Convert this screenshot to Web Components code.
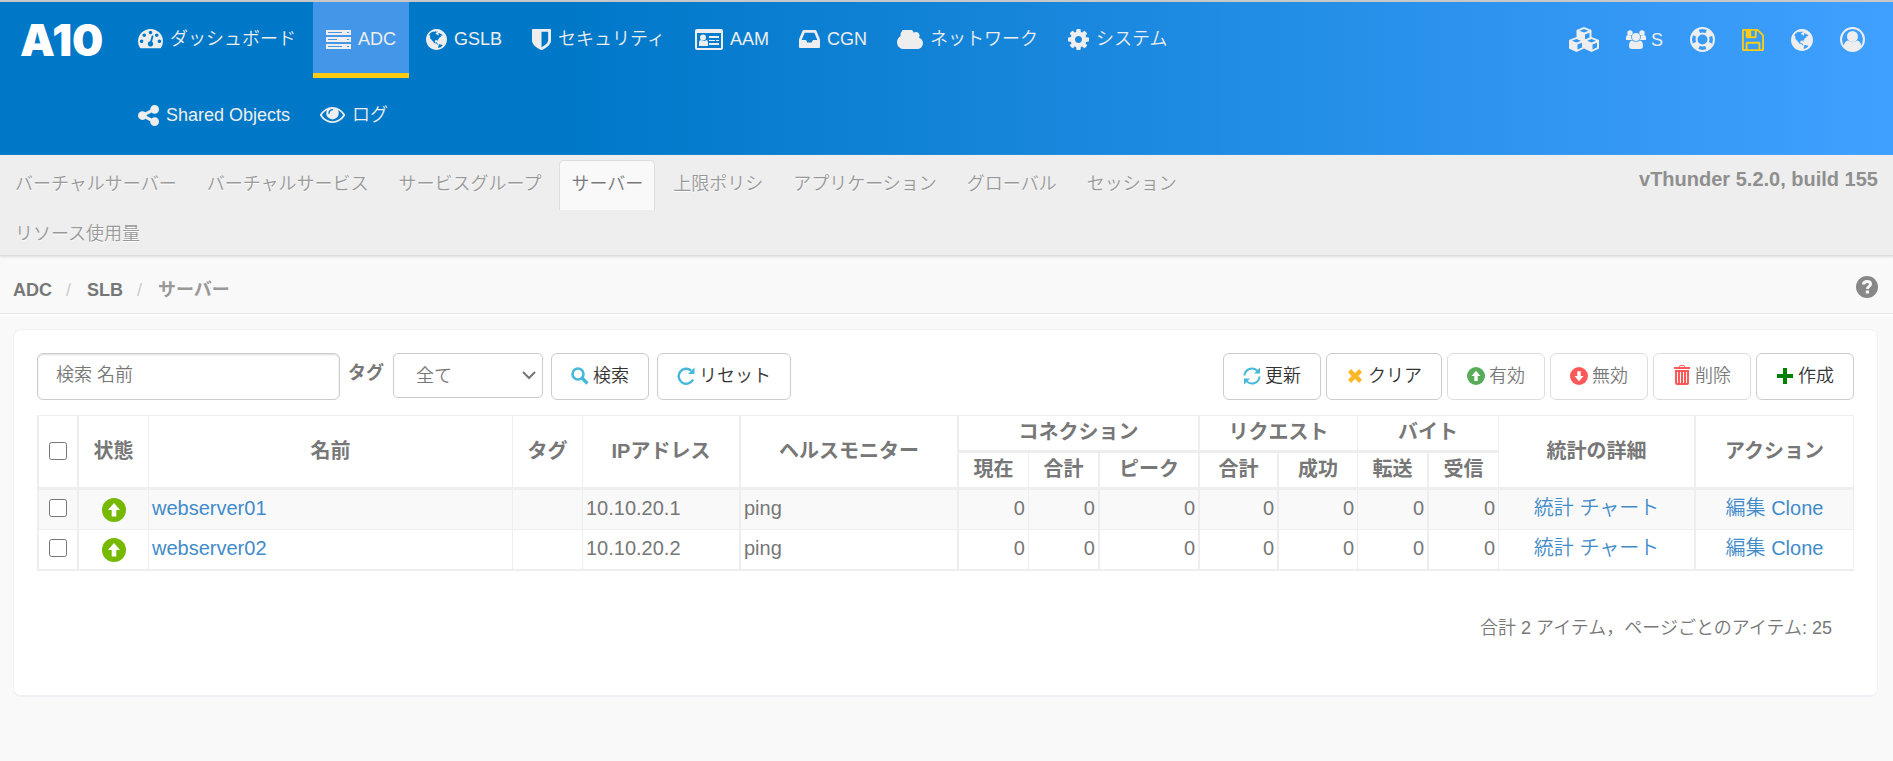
<!DOCTYPE html>
<html lang="ja">
<head>
<meta charset="utf-8">
<meta name="viewport" content="width=device-width, initial-scale=1">
<title>サーバー - A10</title>
<style>
  body {
    margin: 0;
    background: #f9f9f9;
    color: #777;
    font: 18px/24px "Liberation Sans", "Noto Sans CJK JP", sans-serif;
    --thin: 350;
  }
</style>
</head>
<body>
<adc-app></adc-app>
<script>
const ICONS = {
  dash: ['0 256 1792 1536', '<path d="M384 1152q0-53-37.500-90.500t-90.500-37.500-90.500 37.500-37.500 90.500 37.500 90.500 90.500 37.500 90.500-37.500 37.500-90.500zm192-448q0-53-37.500-90.500t-90.500-37.500-90.500 37.500-37.500 90.500 37.500 90.500 90.500 37.500 90.500-37.500 37.500-90.500zm428 481l101-382q6-26-7.500-48.500t-38.500-29.500-48 6.500-30 39.500l-101 382q-60 5-107 43.500t-63 98.500q-20 77 20 146t117 89 146-20 89-117q16-60-6-117t-72-91zm660-33q0-53-37.500-90.500t-90.500-37.500-90.500 37.500-37.500 90.500 37.500 90.500 90.500 37.500 90.500-37.500 37.500-90.500zm-640-640q0-53-37.500-90.500t-90.500-37.500-90.500 37.500-37.500 90.500 37.500 90.500 90.500 37.500 90.500-37.500 37.500-90.500zm448 192q0-53-37.500-90.500t-90.500-37.500-90.500 37.500-37.500 90.500 37.500 90.500 90.500 37.500 90.500-37.500 37.500-90.500zm320 448q0 261-141 483-19 29-54 29h-1402q-35 0-54-29-141-221-141-483 0-182 71-348t191-286 286-191 348-71 348 71 286 191 191 286 71 348z"/>'],
  server: ['0 0 25 19', '<path fill-rule="evenodd" d="M0 0h25v5H0zM2 2v1h14v-1zM21 2v1h2v-1zM0 7h25v5H0zM2 9v1h9v-1zM21 9v1h2v-1zM0 14h25v5H0zM2 16v1h14v-1zM21 16v1h2v-1z"/>'],
  globe: ['128 128 1536 1536', '<path d="M896 128q209 0 385.500 103t279.500 279.500 103 385.500-103 385.500-279.500 279.500-385.500 103-385.500-103-279.500-279.500-103-385.500 103-385.500 279.500-279.500 385.500-103zm274 521q-2 1-9.500 9.500t-13.500 9.500q2 0 4.500-5t5-11 3.500-7q6-7 22-15 14-6 52-12 34-8 51 11-2-2 9.500-13t14.500-12q3-2 15-4.500t15-7.500l2-22q-12 1-17.500-7t-6.500-21q0 2-6 8 0-7-4.500-8t-11.500 1-9 1q-10-3-15-7.500t-8-16.500-4-15q-2-5-9.500-10.500t-9.500-10.500q-1-2-2.500-5.500t-3-6.500-4-5.500-5.500-2.500-7 5-7.500 10-4.500 5q-3-2-6-1.500t-4.500 1-4.500 3-5 3.500q-3 2-8.500 3t-8.500 2q15-5-1-11-10-4-16-3 9-4 7.500-12t-8.500-14h5q-1-4-8.500-8.500t-17.500-8.500-13-6q-8-5-34-9.500t-33-.5q-5 6-4.500 10.500t4 14 3.500 12.500q1 6-5.500 13t-6.500 12q0 7 14 15.500t10 21.500q-3 8-16 16t-16 12q-5 8-1.500 18.500t10.500 16.500q2 2 1.500 4t-3.500 4.500-5.500 4-6.500 3.500l-3 2q-11 5-20.500-6t-13.500-26q-7-25-16-30-23-8-29 1-5-13-41-26-25-9-58-4 6-1 0-15-7-15-19-12 3-6 4-17.500t1-13.500q3-13 12-23 1-1 7-8.500t9.500-13.500.5-6q35 4 50-11 5-5 11.500-17t10.500-17q9-6 14-5.500t14.500 5.500 14.500 5q14 1 15.500-11t-7.500-20q12 1 3-17-4-7-8-9-12-4-27 5-8 4 2 8-1-1-9.500 10.500t-16.500 17.500-16-5q-1-1-5.500-13.500t-9.500-13.500q-8 0-16 15 3-8-11-15t-24-8q19-12-8-27-7-4-20.500-5t-19.500 4q-5 7-5.500 11.500t5 8 10.500 5.500 11.500 4 8.500 3q14 10 8 14-2 1-8.500 3.500t-11.500 4.500-6 4q-3 4 0 14t-2 14q-5-5-9-17.500t-7-16.500q7 9-25 6l-10-1q-4 0-16 2t-20.500 1-13.500-8q-4-8 0-20 1-4 4-2-4-3-11-9.500t-10-8.500q-46 15-94 41 6 1 12-1 5-2 13-6.500t10-5.500q34-14 42-7l5-5q14 16 20 25-7-4-30-1-20 6-22 12 7 12 5 18-4-3-11.500-10t-14.500-11-15-5q-16 0-22 1-146 80-235 222 7 7 12 8 4 1 5 9t2.500 11 11.500-3q9 8 3 19 1-1 44 27 19 17 21 21 3 11-10 18-1-2-9-9t-9-4q-3 5 .5 18.500t10.500 12.500q-7 0-9.500 16t-2.500 35.500-1 23.500l2 1q-3 12 5.500 34.500t21.500 19.500q-13 3 20 43 6 8 8 9 3 2 12 7.500t15 10 10 10.500q4 5 10 22.500t14 23.500q-2 6 9.500 20t10.500 23q-1 0-2.500 1t-2.500 1q3 7 15.500 14t15.500 13q1 3 2 10t3 11 8 2q2-20-24-62-15-25-17-29-3-5-5.500-15.500t-4.500-14.500q2 0 6 1.500t8.500 3.500 7.500 4 2 3q-3 7 2 17.500t12 18.500 17 19 12 13q6 6 14 19.500t0 13.500q9 0 20 10t17 20q5 8 8 26t5 24q2 7 8.500 13.500t12.500 9.500l16 8 13 7q5 2 18.500 10.500t21.500 11.500q10 4 16 4t14.500-2.500 13.500-3.500q15-2 29 15t21 21q36 19 55 11-2 1 .5 7.500t8 15.500 9 14.500 5.500 8.500q5 6 18 15t18 15q6-4 7-9-3 8 7 20t18 10q14-3 14-32-31 15-49-18 0-1-2.500-5.500t-4-8.500-2.500-8.500 0-7.500 5-3q9 0 10-3.500t-2-12.500-4-13q-1-8-11-20t-12-15q-5 9-16 8t-16-9q0 1-1.500 5.500t-1.500 6.500q-13 0-15-1 1-3 2.500-17.500t3.500-22.500q1-4 5.500-12t7.500-14.500 4-12.500-4.500-9.500-17.500-2.500q-19 1-26 20-1 3-3 10.500t-5 11.500-9 7q-7 3-24 2t-24-5q-13-8-22.500-29t-9.500-37q0-10 2.500-26.500t3-25-5.500-24.500q3-2 9-9.500t10-10.500q2-1 4.500-1.500t4.500 0 4-1.500 3-6q-1-1-4-3-3-3-4-3 7 3 28.500-1.500t27.500 1.500q15 11 22-2 0-1-2.500-9.500t-.5-13.500q5 27 29 9 3 3 15.500 5t17.500 5q3 2 7 5.500t5.500 4.500 5-.5 8.500-6.500q10 14 12 24 11 40 19 44 7 3 11 2t4.500-9.500 0-14-1.500-12.500l-1-8v-18l-1-8q-15-3-18.500-12t1.500-18.500 15-18.500q1-1 8-3.500t15.500-6.500 12.500-8q21-19 15-35 7 0 11-9-1 0-5-3t-7.500-5-4.500-2q9-5 2-16 5-3 7.500-11t7.500-10q9 12 21 2 7-8 1-16 5-7 20.500-10.500t18.500-9.500q7 2 8-2t1-12 3-12q4-5 15-9t13-5l17-11q3-4 0-4 18 2 31-11 10-11-6-20 3-6-3-9.500t-15-5.500q3-1 11.500-.5t10.500-1.500q15-10-7-16-17-5-43 12zm-163 877q206-36 351-189-3-3-12.500-4.500t-12.500-3.500q-18-7-24-8 1-7-2.500-13t-8-9-12.500-8-11-7q-2-2-7-6t-7-5.500-7.500-4.500-8.500-2-10 1l-3 1q-3 1-5.500 2.500t-5.500 3-4 3 0 2.500q-21-17-36-22-5-1-11-5.500t-10.500-7-10-1.500-11.500 7q-5 5-6 15t-2 13q-7-5 0-17.500t2-18.500q-3-6-10.500-4.500t-12 4.500-11.500 8.500-9 6.500-8.500 5.500-8.500 7.500q-3 4-6 12t-5 11q-2-4-11.500-6.500t-9.500-5.500q2 10 4 35t5 38q7 31-12 48-27 25-29 40-4 22 12 26 0 7-8 20.500t-7 21.500q0 6 2 16z"/>'],
  shield: ['256 128 1280 1536', '<path d="M1344 960v-640h-448v1137q119-63 213-137 235-184 235-360zm192-768v768q0 86-33.500 170.500t-83 150-118 127.500-126.500 103-121 77.500-89.500 49.500-42.500 20q-12 6-26 6t-26-6q-16-7-42.500-20t-89.500-49.500-121-77.500-126.500-103-118-127.500-83-150-33.500-170.500v-768q0-26 19-45t45-19h1152q26 0 45 19t19 45z"/>'],
  card: ['0 0 28 21', '<path fill-rule="evenodd" d="M2 0h24q2 0 2 2v17q0 2-2 2H2q-2 0-2-2V2q0-2 2-2zM2 4v15h24V4zM14 7h10v2H14zM14 11h6v1h-6zM21 11h3v1h-3zM14 14h10v2H14zM4 17v-3q0-3 2-3 4 2 5 0 2 0 2 3v3z"/><circle cx="8" cy="8.500" r="3"/>'],
  inbox: ['128 256 1536 1280', '<path d="M1151 960h316q-1-3-2.500-8t-2.500-8l-212-496h-708l-212 496q-1 2-2.500 8t-2.500 8h316l95 192h320zm513 30v482q0 26-19 45t-45 19h-1408q-26 0-45-19t-19-45v-482q0-62 25-123l238-552q10-25 36.500-42t52.500-17h832q26 0 52.500 17t36.500 42l238 552q25 61 25 123z"/>'],
  cloud: ['64 256 1920 1280', '<path d="M1984 1152q0 159-112.500 271.500t-271.500 112.500h-1088q-185 0-316.500-131.500t-131.500-316.500q0-132 71-241.500t187-163.500q-2-28-2-43 0-212 150-362t362-150q158 0 286.500 88t187.500 230q70-62 166-62 106 0 181 75t75 181q0 75-41 138 129 30 213 134.500t84 239.500z"/>'],
  cog: ['128 128 1536 1536', '<path d="M1152 896q0-106-75-181t-181-75-181 75-75 181 75 181 181 75 181-75 75-181zm512-109v222q0 12-8 23t-20 13l-185 28q-19 54-39 91 35 50 107 138 10 12 10 25t-9 23q-27 37-99 108t-94 71q-12 0-26-9l-138-108q-44 23-91 38-16 136-29 186-7 28-36 28h-222q-14 0-24.500-8.500t-11.500-21.500l-28-184q-49-16-90-37l-141 107q-10 9-25 9-14 0-25-11-126-114-165-168-7-10-7-23 0-12 8-23 15-21 51-66.500t54-70.500q-27-50-41-99l-183-27q-13-2-21-12.500t-8-23.500v-222q0-12 8-23t19-13l186-28q14-46 39-92-40-57-107-138-10-12-10-24 0-10 9-23 26-36 98.500-107.500t94.500-71.500q13 0 26 10l138 107q44-23 91-38 16-136 29-186 7-28 36-28h222q14 0 24.500 8.500t11.500 21.500l28 184q49 16 90 37l142-107q9-9 24-9 13 0 25 10 129 119 165 170 7 8 7 22 0 12-8 23-15 21-51 66.500t-54 70.500q26 50 41 98l183 28q13 2 21 12.500t8 23.500z"/>'],
  share: ['128 128 1536 1536', '<path d="M1344 1024q133 0 226.500 93.500t93.500 226.500-93.500 226.500-226.500 93.500-226.500-93.500-93.500-226.500q0-12 2-34l-360-180q-92 86-218 86-133 0-226.500-93.500t-93.500-226.500 93.500-226.500 226.500-93.500q126 0 218 86l360-180q-2-22-2-34 0-133 93.500-226.500t226.500-93.500 226.500 93.500 93.500 226.500-93.500 226.500-226.500 93.500q-126 0-218-86l-360 180q2 22 2 34t-2 34l360 180q92-86 218-86z"/>'],
  eye: ['0 384 1792 1152', '<path d="M1664 960q-152-236-381-353 61 104 61 225 0 185-131.500 316.500t-316.500 131.500-316.500-131.500-131.500-316.500q0-121 61-225-229 117-381 353 133 205 333.500 326.500t434.500 121.500 434.500-121.500 333.500-326.500zm-720-384q0-20-14-34t-34-14q-125 0-214.500 89.500t-89.500 214.500q0 20 14 34t34 14 34-14 14-34q0-86 61-147t147-61q20 0 34-14t14-34zm848 384q0 34-20 69-140 230-376.500 368.500t-499.500 138.500-499.500-139-376.500-368q-20-35-20-69t20-69q140-229 376.500-368t499.500-139 499.500 139 376.500 368q20 35 20 69z"/>'],
  cubes: ['0 0 30 25', '<path fill-rule="evenodd" d="M15 0L22.500 3V11.500L15 15 7.500 11.500V3zM15 2L10.500 3.800 15 5.600 19.500 3.800zM16 7.500V12.500L20.500 10.400V5.700z"/><path fill-rule="evenodd" d="M7.500 10L15 13V21.500L7.500 25 0 21.500V13zM7.500 12L3 13.800 7.500 15.600 12 13.800zM8.500 17.500V22.500L13 20.400V15.700z"/><path fill-rule="evenodd" d="M22.500 10L30 13V21.500L22.500 25 15 21.500V13zM22.500 12L18 13.800 22.500 15.600 27 13.800zM23.500 17.500V22.500L28 20.400V15.700z"/>'],
  users: ['0 0 20 19', '<circle cx="4" cy="3" r="2.700"/><circle cx="16" cy="3" r="2.700"/><circle cx="10" cy="7" r="4"/><path d="M0 10V8q0-3 2-3 2 1 3.200 1Q5 9 6.500 10zM20 10V8q0-3-2-3-2 1-3.200 1Q15 9 13.500 10zM3 16q0-5 3-5.500 4 2.500 8 0 3 .5 3 5.500 0 3-3 3H6q-3 0-3-3z"/>'],
  ring: ['0 0 25 25', '<g fill="none" stroke="currentColor"><circle cx="12.500" cy="12.500" r="11.500" stroke-width="2"/><circle cx="12.500" cy="12.500" r="6" stroke-width="2"/><circle cx="12.500" cy="12.500" r="8.500" stroke-width="6" stroke-dasharray="6.676 6.676" stroke-dashoffset="-3.338"/></g>'],
  save: ['128 128 1536 1536', '<path d="M512 1536h768v-384h-768v384zm896 0h128v-896q0-14-10-38.500t-20-34.500l-281-281q-10-10-34-20t-39-10v416q0 40-28 68t-68 28h-576q-40 0-68-28t-28-68v-416h-128v1280h128v-416q0-40 28-68t68-28h832q40 0 68 28t28 68v416zm-384-928v-320q0-13-9.500-22.500t-22.500-9.500h-192q-13 0-22.500 9.500t-9.500 22.500v320q0 13 9.500 22.500t22.500 9.500h192q13 0 22.500-9.500t9.500-22.500zm640 32v928q0 40-28 68t-68 28h-1344q-40 0-68-28t-28-68v-1344q0-40 28-68t68-28h928q40 0 88 20t76 48l280 280q28 28 48 76t20 88z"/>'],
  user: ['0 0 25 25', '<circle cx="12.500" cy="12.500" r="11.500" fill="none" stroke="currentColor" stroke-width="2"/><circle cx="12.500" cy="9.500" r="5.500"/><path d="M3.500 19.500Q4.500 14 8 13.500q4.500 3.500 9 0 3.500.5 4.500 6-3.500 4.500-9 4.500t-9-4.500z"/>'],
  help: ['0 0 22 22', '<circle cx="11" cy="11" r="11"/><path d="M7.500 8.500Q7.500 5.500 11.200 5.500q3.300 0 3.300 2.600 0 1.600-1.800 2.600-1.200.7-1.200 2.300" fill="none" stroke="#f9f9f9" stroke-width="3"/><path d="M9.800 14.500h3.200v3h-3.200z" fill="#f9f9f9"/>'],
  search: ['0 0 18 18', '<circle cx="7" cy="7" r="5.500" fill="none" stroke="currentColor" stroke-width="2.600"/><path d="M11 11l5.500 5.500" stroke="currentColor" stroke-width="3.400"/>'],
  repeat: ['0 0 18 18', '<path d="M16 12.500A7.500 7.500 0 1 1 14.200 3.600" fill="none" stroke="currentColor" stroke-width="2.400"/><path d="M17.500 .5v6.500h-6.500z"/>'],
  refresh: ['0 0 18 18', '<path d="M1.500 8.500A7.500 7.500 0 0 1 14.200 3.600M16.500 9.500A7.500 7.500 0 0 1 3.800 14.400" fill="none" stroke="currentColor" stroke-width="2"/><path d="M17 .5v6h-6zM1 17.500v-6h6z"/>'],
  clear: ['0 0 18 18', '<path d="M5 2l4 4 4-4 3 3.200L12.400 9l3.600 3.800L13 16l-4-4-4 4-3-3.200L5.600 9 2 5.200z"/>'],
  up: ['0 0 24 24', '<circle cx="12" cy="12" r="12"/><path d="M12 5l6 7h-3.700v6.500H9.700V12H6z" fill="#fff"/>'],
  down: ['0 0 24 24', '<circle cx="12" cy="12" r="12"/><path d="M12 19l6-7h-3.700V5.500H9.700V12H6z" fill="#fff"/>'],
  trash: ['0 0 18 22', '<path fill-rule="evenodd" d="M6 2q0-2 2-2h2q2 0 2 2h5v2H1V2zM7 2h4V1H7zM2 5h14v13q0 2-2 2H4q-2 0-2-2zM4 7v11h1V7zM7 7v11h1V7zM10 7v11h1V7zM13 7v11h1V7z"/>'],
  plus: ['0 0 18 18', '<path d="M7 1h4v6h6v4h-6v6H7v-6H1V7h6z"/>'],
  chevron: ['0 0 14 9', '<path d="M1 1l6 6 6-6" fill="none" stroke="currentColor" stroke-width="2"/>']
};

function define(name, html, setup) {
  const template = document.createElement('template');
  template.innerHTML = html;
  customElements.define(name, class extends HTMLElement {
    constructor() {
      super();
      this.attachShadow({ mode: 'open' }).append(template.content.cloneNode(true));
    }
    connectedCallback() { if (setup) setup(this, this.shadowRoot); }
  });
}

/* Single icon: name, w and h (pixels) attributes */
define('ui-icon', '<style>:host{display:inline-block;flex:none;line-height:0}svg{display:block;fill:currentColor}</style><svg aria-hidden="true"></svg>', (el, root) => {
  const svg = root.querySelector('svg');
  const [box, shapes] = ICONS[el.getAttribute('name')];
  svg.setAttribute('viewBox', box);
  svg.setAttribute('width', el.getAttribute('w'));
  svg.setAttribute('height', el.getAttribute('h'));
  svg.setAttribute('preserveAspectRatio', 'none');
  svg.innerHTML = shapes;
});

/* Main navigation entry */
define('nav-item', `<style>
  :host { display: block; }
  a { display: flex; align-items: center; gap: 7px; box-sizing: border-box; height: 76px; padding: 3px 13px 0; border-bottom: 5px solid transparent; color: #eee; text-decoration: none; white-space: nowrap; font-weight: var(--thin); }
  :host([active]) a { background: #4497e8; border-color: #ffcb13; }
</style><a href="#"><slot name="icon"></slot><span><slot></slot></span></a>`);

/* Shortcut at the right of the top bar */
define('quick-link', `<style>
  :host { display: block; }
  a { display: flex; align-items: center; gap: 5px; color: #eee; text-decoration: none; }
  :host([alert]) a { color: #fc1; }
</style><a href="#"><slot></slot></a>`, (el, root) => root.querySelector('a').setAttribute('aria-label', el.getAttribute('label')));

define('top-bar', `<style>
  :host { display: block; border-top: 2px solid #c8c8c8; padding-bottom: 1px; background: linear-gradient(to right, #0078c8 30%, #40a0ff); }
  header { display: flex; align-items: flex-start; }
  .logo { box-sizing: border-box; width: 125px; padding: 8px 0 0 20px; line-height: 0; }
  .logo svg { display: block; }
  nav { display: flex; flex-wrap: wrap; gap: 0 4px; width: 64%; }
  .quick { display: flex; align-items: center; gap: 27px; height: 76px; box-sizing: border-box; margin-left: auto; padding: 0 28px 1px 0; }
</style>
<header>
  <a class="logo" href="#" aria-label="A10"><svg width="96" height="60" aria-hidden="true"><text x="0" y="46" fill="#fff" font-family="Inter, sans-serif" font-weight="900" font-size="44">A10</text></svg></a>
  <nav aria-label="メイン">
    <nav-item><ui-icon slot="icon" name="dash" w="25" h="21"></ui-icon>ダッシュボード</nav-item>
    <nav-item active><ui-icon slot="icon" name="server" w="25" h="19"></ui-icon>ADC</nav-item>
    <nav-item><ui-icon slot="icon" name="globe" w="21" h="21"></ui-icon>GSLB</nav-item>
    <nav-item><ui-icon slot="icon" name="shield" w="19" h="21"></ui-icon>セキュリティ</nav-item>
    <nav-item><ui-icon slot="icon" name="card" w="28" h="21"></ui-icon>AAM</nav-item>
    <nav-item><ui-icon slot="icon" name="inbox" w="21" h="18"></ui-icon>CGN</nav-item>
    <nav-item><ui-icon slot="icon" name="cloud" w="26" h="19"></ui-icon>ネットワーク</nav-item>
    <nav-item><ui-icon slot="icon" name="cog" w="21" h="21"></ui-icon>システム</nav-item>
    <nav-item><ui-icon slot="icon" name="share" w="21" h="21"></ui-icon>Shared Objects</nav-item>
    <nav-item><ui-icon slot="icon" name="eye" w="25" h="16"></ui-icon>ログ</nav-item>
  </nav>
  <div class="quick">
    <quick-link label="アプリケーション"><ui-icon name="cubes" w="30" h="25"></ui-icon></quick-link>
    <quick-link label="パーティション"><ui-icon name="users" w="20" h="19"></ui-icon>S</quick-link>
    <quick-link label="ヘルプ"><ui-icon name="ring" w="25" h="25"></ui-icon></quick-link>
    <quick-link label="保存" alert><ui-icon name="save" w="22" h="22"></ui-icon></quick-link>
    <quick-link label="言語"><ui-icon name="globe" w="22" h="22"></ui-icon></quick-link>
    <quick-link label="ユーザー"><ui-icon name="user" w="25" h="25"></ui-icon></quick-link>
  </div>
</header>`);

define('sub-item', `<style>
  :host { display: block; }
  a { display: block; box-sizing: border-box; height: 50px; padding: 11px 11px 0; border: 1px solid transparent; border-bottom: 0; border-radius: 5px 5px 0 0; color: #999; text-decoration: none; text-shadow: 0 1px 0 #fff; white-space: nowrap; font-weight: var(--thin); }
  :host([active]) a { color: #777; background: #f9f9f9; border-color: #ddd; }
</style><a href="#"><slot></slot></a>`);

define('sub-bar', `<style>
  :host { display: flex; justify-content: space-between; align-items: flex-start; padding: 5px 15px 0 3px; background: #eee; border-bottom: 1px solid #ddd; box-shadow: 0 1px 2px #ddd; }
  nav { display: flex; flex-wrap: wrap; gap: 0 6px; width: 67%; margin-bottom: -5px; }
  strong { padding-top: 7px; color: #8f8f8f; font-size: 20px; }
</style>
<nav aria-label="ADC">
  <sub-item>バーチャルサーバー</sub-item>
  <sub-item>バーチャルサービス</sub-item>
  <sub-item>サービスグループ</sub-item>
  <sub-item active>サーバー</sub-item>
  <sub-item>上限ポリシ</sub-item>
  <sub-item>アプリケーション</sub-item>
  <sub-item>グローバル</sub-item>
  <sub-item>セッション</sub-item>
  <sub-item>リソース使用量</sub-item>
</nav>
<strong>vThunder 5.2.0, build 155</strong>`);

define('crumb-bar', `<style>
  :host { display: flex; justify-content: space-between; align-items: center; padding: 20px 15px 9px 13px; border-bottom: 1px solid #e8e8e8; box-shadow: 0 2px 0 #fff; font-weight: 700; }
  ol { display: flex; margin: 0; padding: 0; list-style: none; }
  li + li::before { content: "/"; padding: 0 16px 0 14px; color: #ccc; font-weight: 400; }
  a { color: #777; text-decoration: none; }
  .here { color: #999; }
  .help { color: #888; }
</style>
<ol><li><a href="#">ADC</a></li><li><a href="#">SLB</a></li><li class="here" aria-current="page">サーバー</li></ol>
<a class="help" href="#" aria-label="ヘルプ"><ui-icon name="help" w="22" h="22"></ui-icon></a>`);

/* Push button; "tone" colours its icon */
define('ui-button', `<style>
  :host { display: block; }
  button { display: flex; align-items: center; gap: 4px; height: 47px; box-sizing: border-box; padding: 0 19px 2px; border: 1px solid #ccc; border-radius: 6px; background: #fff; color: #333; font: inherit; font-weight: var(--thin); white-space: nowrap; }
  button:disabled { opacity: .65; }
  ::slotted(ui-icon) { color: var(--tone); }
</style><button type="button"><slot></slot></button>`, (el, root) => {
  root.querySelector('button').disabled = el.hasAttribute('disabled');
  el.style.setProperty('--tone', el.getAttribute('tone'));
});

define('tool-bar', `<style>
  :host { display: flex; justify-content: space-between; align-items: flex-start; gap: 16px; }
  form, .actions { display: flex; align-items: flex-start; }
  form { gap: 8px; }
  .actions { gap: 5px; }
  input { box-sizing: border-box; width: 303px; height: 47px; padding: 0 18px 2px; border: 1px solid #ccc; border-radius: 6px; background: #fff; box-shadow: inset 0 1px 2px #ddd; font: inherit; font-weight: var(--thin); color: #555; }
  input::placeholder { color: #777; opacity: 1; }
  label { padding: 8px 1px 0 0; font-weight: 700; }
  .pick { display: grid; align-items: center; width: 150px; }
  .pick > * { grid-area: 1 / 1; }
  .pick ui-icon { justify-self: end; margin-right: 7px; pointer-events: none; }
  select { appearance: none; height: 45px; width: 100%; box-sizing: border-box; padding: 0 22px; border: 1px solid #ccc; border-radius: 5px; background: #fff; color: #777; font: inherit; font-weight: var(--thin); }
</style>
<form>
  <input type="text" placeholder="検索 名前" aria-label="検索 名前">
  <label for="tag">タグ</label>
  <span class="pick"><select id="tag"><option>全て</option></select><ui-icon name="chevron" w="14" h="9"></ui-icon></span>
  <ui-button tone="#46b8da"><ui-icon name="search" w="18" h="18"></ui-icon>検索</ui-button>
  <ui-button tone="#46b8da"><ui-icon name="repeat" w="18" h="18"></ui-icon>リセット</ui-button>
</form>
<div class="actions">
  <ui-button tone="#46b8da"><ui-icon name="refresh" w="18" h="18"></ui-icon>更新</ui-button>
  <ui-button tone="#fdb827"><ui-icon name="clear" w="18" h="18"></ui-icon>クリア</ui-button>
  <ui-button tone="#008000" disabled><ui-icon name="up" w="18" h="18"></ui-icon>有効</ui-button>
  <ui-button tone="#ff0000" disabled><ui-icon name="down" w="18" h="18"></ui-icon>無効</ui-button>
  <ui-button tone="#ff0000" disabled><ui-icon name="trash" w="18" h="22"></ui-icon>削除</ui-button>
  <ui-button tone="#008000"><ui-icon name="plus" w="18" h="18"></ui-icon>作成</ui-button>
</div>`);

define('server-table', `<style>
  :host { display: block; }
  table { width: 100%; table-layout: fixed; border-collapse: separate; border-spacing: 0; border: solid #eee; border-width: 1px 0 1px 2px; font-size: 20px; line-height: 24px; }
  .c40 { width: 40px; } .c70 { width: 70px; } .c71 { width: 71px; } .c79 { width: 79px; } .c100 { width: 100px; }
  .c158 { width: 158px; } .c197 { width: 197px; } .c218 { width: 218px; }
  th, td { box-sizing: border-box; padding: 0 3px; border: solid #eee; border-width: 0 1px 1px 0; white-space: nowrap; }
  th { height: 37px; padding-bottom: 2px; border-bottom-width: 3px; text-align: center; font-weight: 700; }
  td { height: 40px; padding-bottom: 3px; font-weight: var(--thin); }
  .w { border-right-width: 2px; }
  tbody tr:nth-child(odd) { background: #f9f9f9; }
  .num { text-align: right; }
  .mid { text-align: center; }
  a { color: #428bca; text-decoration: none; }
  input { display: block; width: 18px; height: 18px; margin: 0 auto; }
  .up { display: block; width: 24px; margin: 0 auto; color: #76b900; }
  .state { padding: 0; }
</style>
<table>
  <colgroup><col class="c40"><col class="c70"><col><col class="c70"><col class="c158"><col class="c218"><col class="c70"><col class="c71"><col class="c100"><col class="c79"><col class="c79"><col class="c71"><col class="c70"><col class="c197"><col class="c158"></colgroup>
  <thead>
    <tr>
      <th class="w" rowspan="2"><input type="checkbox" aria-label="全て選択"></th>
      <th rowspan="2">状態</th><th rowspan="2">名前</th><th rowspan="2">タグ</th>
      <th class="w" rowspan="2">IPアドレス</th><th class="w" rowspan="2">ヘルスモニター</th>
      <th class="w" colspan="3">コネクション</th><th colspan="2">リクエスト</th><th colspan="2">バイト</th>
      <th class="w" rowspan="2">統計の詳細</th><th rowspan="2">アクション</th>
    </tr>
    <tr><th>現在</th><th class="w">合計</th><th class="w">ピーク</th><th class="w">合計</th><th>成功</th><th class="w">転送</th><th>受信</th></tr>
  </thead>
  <tbody></tbody>
</table>`, (el, root) => {
  root.querySelector('tbody').innerHTML = [['webserver01', '10.10.20.1'], ['webserver02', '10.10.20.2']].map(([name, ip]) => `<tr>
    <td class="w"><input type="checkbox" aria-label="${name}"></td>
    <td class="state"><ui-icon class="up" name="up" w="24" h="24"></ui-icon></td>
    <td><a href="#">${name}</a></td><td></td><td class="w">${ip}</td><td class="w">ping</td>
    <td class="num">0</td><td class="num w">0</td><td class="num w">0</td><td class="num w">0</td><td class="num">0</td><td class="num w">0</td><td class="num">0</td>
    <td class="mid w"><a href="#">統計</a> <a href="#">チャート</a></td>
    <td class="mid"><a href="#">編集</a> <a href="#">Clone</a></td></tr>`).join('');
});

define('content-panel', `<style>
  :host { display: block; box-sizing: border-box; margin: 15px 15px 0 13px; padding: 23px 23px 55px; border: 1px solid #f0f1f5; border-bottom-width: 2px; border-radius: 8px; background: #fff; }
</style><slot></slot>`);

define('adc-app', `<style>
  :host { display: block; padding-bottom: 32px; }
  server-table { margin-top: 15px; }
  .total { margin: 45px 22px 0 0; text-align: right; font-weight: var(--thin); }
</style>
<top-bar></top-bar>
<sub-bar></sub-bar>
<crumb-bar></crumb-bar>
<main>
  <content-panel>
    <tool-bar></tool-bar>
    <server-table></server-table>
    <p class="total">合計 2 アイテム，ページごとのアイテム: 25</p>
  </content-panel>
</main>`);
</script>
</body>
</html>
